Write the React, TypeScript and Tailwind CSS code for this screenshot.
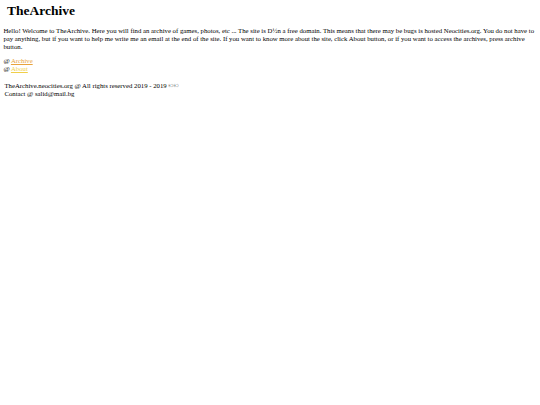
export default function App() {
  return (
    <div className="min-h-[405px] bg-white px-[3.4px] pt-[3px] font-['Liberation_Serif',serif] text-[6.75px] leading-[7.8px] text-black">
      <h1 className="mb-[8px] pl-[3.5px] text-[13.5px] leading-[16px] font-bold">TheArchive</h1>
      <p>
        Hello! Welcome to TheArchive. Here you will find an archive of games, photos, etc ... The site is D½n a free
        domain. This means that there may be bugs is hosted Neocities.org. You do not have to pay anything, but if you
        want to help me write me an email at the end of the site. If you want to know more about the site, click About
        button, or if you want to access the archives, press archive button.
      </p>
      <div className="mt-[7px]">
        <div>
          @ <a href="#" className="text-[#e8a33c] underline">Archive</a>
        </div>
        <div>
          @ <a href="#" className="text-[#f0cf4a] underline">About</a>
        </div>
      </div>
      <div className="mt-[9px] pl-[1px]">
        <div>TheArchive.neocities.org @ All rights reserved 2019 - 2019 ©©</div>
        <div>Contact @ salid@mail.bg</div>
      </div>
    </div>
  )
}
